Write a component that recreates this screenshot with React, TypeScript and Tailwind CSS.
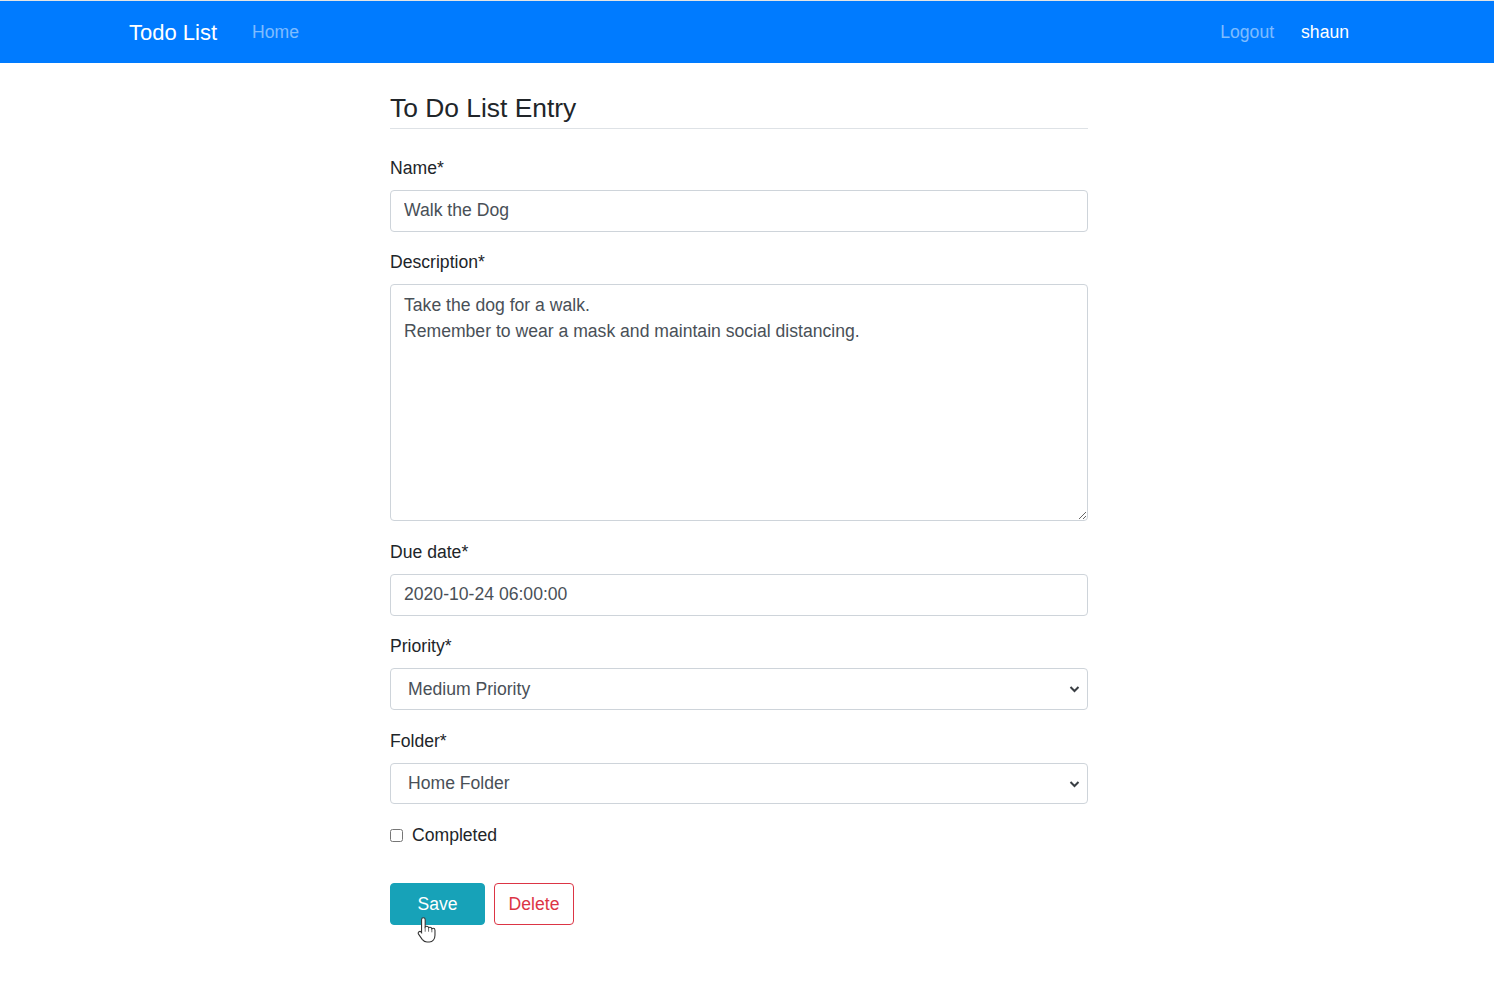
import { useState } from "react";

const FONT = { fontFamily: '"Liberation Sans", Arial, sans-serif' };

function Chevron() {
  return (
    <svg
      className="pointer-events-none absolute right-[8px] top-1/2 -translate-y-1/2"
      width="11"
      height="8"
      viewBox="0 0 11 8"
      fill="none"
    >
      <path d="M1.5 2 L5.5 6 L9.5 2" stroke="#3a3f44" strokeWidth="2" />
    </svg>
  );
}

function HandCursor() {
  return (
    <svg
      className="pointer-events-none absolute left-[26px] top-[33px]"
      width="22"
      height="29"
      viewBox="0 0 18 24"
    >
      <path
        d="M6 1.5C6.8 1.5 7.5 2.1 7.5 3V9C7.8 8.6 8.3 8.5 8.8 8.5C9.6 8.5 10.2 9 10.3 9.7C10.6 9.4 11 9.3 11.5 9.3C12.3 9.3 12.9 9.9 13 10.6C13.3 10.3 13.7 10.2 14.1 10.2C15 10.2 15.6 10.9 15.6 11.7V16C15.6 19 13.8 21.5 11 21.5H9C7.3 21.5 6 20.6 5 19.3L2 15C1.5 14.3 1.7 13.4 2.4 13C3 12.6 3.8 12.8 4.3 13.4L4.5 13.7V3C4.5 2.1 5.2 1.5 6 1.5Z"
        fill="#fff"
        stroke="#333"
        strokeWidth="0.9"
      />
      <path d="M7.5 9V13M10.3 9.7V13M13 10.6V13.5" stroke="#555" strokeWidth="0.7" />
    </svg>
  );
}

export default function App() {
  const [priority, setPriority] = useState("medium");
  const [folder, setFolder] = useState("home");
  const [done, setDone] = useState(false);

  const label = "block text-[17.6px] leading-[26.4px] mb-[8.8px] text-[#212529]";
  const input =
    "block w-full h-[41.6px] rounded-[4px] border border-[#ced4da] bg-white px-[13px] text-[17.6px] text-[#495057] outline-none";
  const select =
    "block w-full h-[41.6px] appearance-none rounded-[4px] border border-[#ced4da] bg-white pl-[17px] pr-[30px] text-[17.6px] text-[#495057] outline-none";

  return (
    <div className="min-h-screen bg-white" style={FONT}>
      <div className="h-px bg-[#e4e4e4]" />
      <nav className="flex h-[62px] items-center justify-between bg-[#007bff] pl-[129px] pr-[145px]">
        <div className="flex items-center gap-[35px]">
          <span className="text-[22px] text-white">Todo List</span>
          <span className="text-[17.6px] text-white/50">Home</span>
        </div>
        <div className="flex items-center gap-[27px] text-[17.6px]">
          <span className="text-white/50">Logout</span>
          <span className="text-white">shaun</span>
        </div>
      </nav>

      <main className="ml-[390px] w-[698px] pt-[30px] pb-10">
        <h4 className="border-b border-[#dee2e6] pb-[3px] text-[26.4px] leading-[31.7px] text-[#212529]">
          To Do List Entry
        </h4>

        <form className="mt-[26px]" onSubmit={(e) => e.preventDefault()}>
          <div className="mb-[17.6px]">
            <label className={label}>Name*</label>
            <input className={input} defaultValue="Walk the Dog" />
          </div>

          <div className="mb-[17.6px]">
            <label className={label}>Description*</label>
            <textarea
              className="block h-[237px] w-full rounded-[4px] border border-[#ced4da] bg-white px-[13px] py-[6.6px] text-[17.6px] leading-[26.4px] text-[#495057] outline-none"
              defaultValue={"Take the dog for a walk.\nRemember to wear a mask and maintain social distancing."}
            />
          </div>

          <div className="mb-[17.6px]">
            <label className={label}>Due date*</label>
            <input className={input} defaultValue="2020-10-24 06:00:00" />
          </div>

          <div className="mb-[17.6px]">
            <label className={label}>Priority*</label>
            <div className="relative">
              <select className={select} value={priority} onChange={(e) => setPriority(e.target.value)}>
                <option value="low">Low Priority</option>
                <option value="medium">Medium Priority</option>
                <option value="high">High Priority</option>
              </select>
              <Chevron />
            </div>
          </div>

          <div className="mb-[17.6px]">
            <label className={label}>Folder*</label>
            <div className="relative">
              <select className={select} value={folder} onChange={(e) => setFolder(e.target.value)}>
                <option value="home">Home Folder</option>
                <option value="work">Work Folder</option>
              </select>
              <Chevron />
            </div>
          </div>

          <div className="mb-[17.6px] flex items-center gap-[9px] leading-[26.4px]">
            <input
              type="checkbox"
              className="m-0 h-[13px] w-[13px]"
              checked={done}
              onChange={() => setDone(!done)}
            />
            <span className="text-[17.6px] text-[#212529]">Completed</span>
          </div>

          <div className="mt-[35px] flex gap-[9px]">
            <div className="relative">
              <button
                type="submit"
                className="h-[41.6px] w-[95px] rounded-[4px] border border-[#17a2b8] bg-[#17a2b8] text-[17.6px] text-white"
              >
                Save
              </button>
              <HandCursor />
            </div>
            <button
              type="button"
              className="h-[41.6px] w-[80px] rounded-[4px] border border-[#dc3545] bg-white text-[17.6px] text-[#dc3545]"
            >
              Delete
            </button>
          </div>
        </form>
      </main>
    </div>
  );
}
